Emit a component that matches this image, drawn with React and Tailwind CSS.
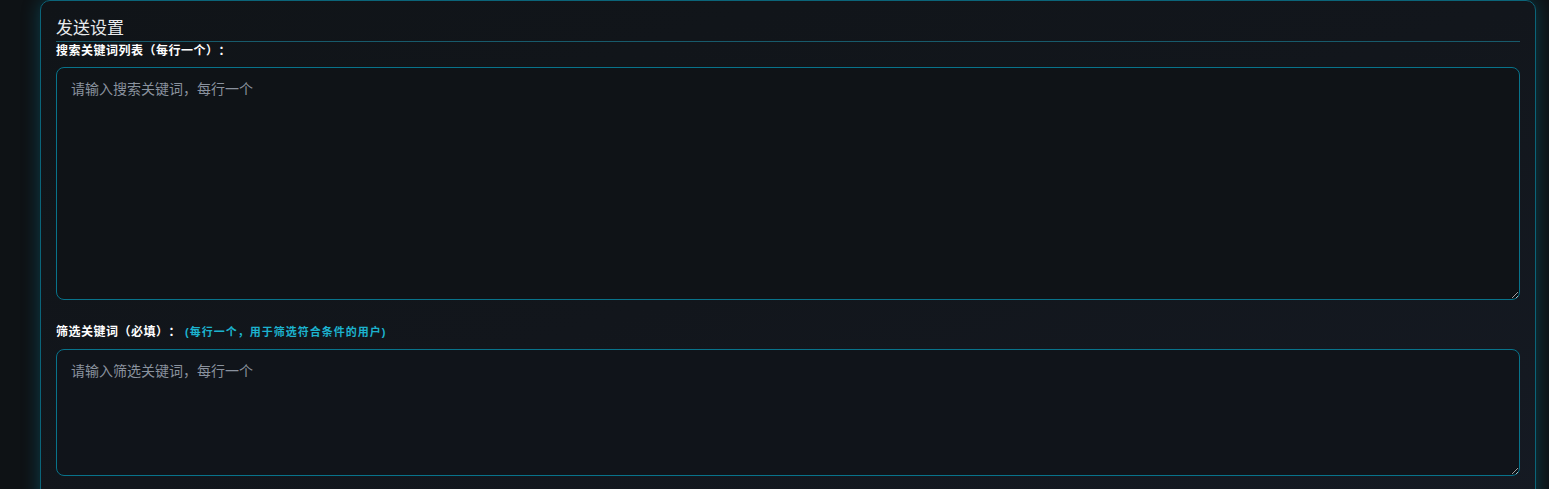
import React, { useState } from 'react'

export default function App() {
	const [keywords, setKeywords] = useState('');
	const [filters, setFilters] = useState('');

	return (
		<div className="min-h-[489px] h-[489px] overflow-hidden bg-[#0e1215] font-['Liberation_Sans','Noto_Sans_CJK_SC',sans-serif] [text-spacing-trim:space-all]">
			<div className="ml-[40px] w-[1496px] h-[520px] rounded-[10px] border border-[#0b6479] bg-gradient-to-br from-[#101418] via-[#12161c] to-[#151a23] px-[15px] pt-[16px] shadow-[0_0_18px_rgba(8,145,178,0.35)]">
				<h2 className="text-[17px] leading-[24px] text-[#e8eaed] border-b border-[#175a6b]">发送设置</h2>

				{/* 搜索关键词 */}
				<label className="block text-[12px] leading-[18px] tracking-[0.5px] font-bold text-white">搜索关键词列表（每行一个）：</label>
				<textarea
					value={keywords}
					onChange={(e) => setKeywords(e.target.value)}
					placeholder="请输入搜索关键词，每行一个"
					className="mt-[7px] block w-full h-[233px] rounded-[8px] border border-[#08738b] bg-[#0f1317] px-[14px] py-[11px] text-[14px] leading-[20px] text-[#d1d5db] placeholder-[#8a929e] outline-none"
				/>

				{/* 筛选关键词 */}
				<div className="mt-[23px] flex items-center text-[12px] leading-[18px] font-bold">
					<span className="text-white tracking-[0.5px]">筛选关键词（必填）：</span>
					<span className="ml-[4px] text-[11px] tracking-[1px] text-[#1cb3cf]">(每行一个，用于筛选符合条件的用户)</span>
				</div>
				<textarea
					value={filters}
					onChange={(e) => setFilters(e.target.value)}
					placeholder="请输入筛选关键词，每行一个"
					className="mt-[8px] block w-full h-[127px] rounded-[8px] border border-[#08738b] bg-[#10141a] px-[14px] py-[11px] text-[14px] leading-[20px] text-[#d1d5db] placeholder-[#8a929e] outline-none"
				/>
			</div>
		</div>
	)
}
